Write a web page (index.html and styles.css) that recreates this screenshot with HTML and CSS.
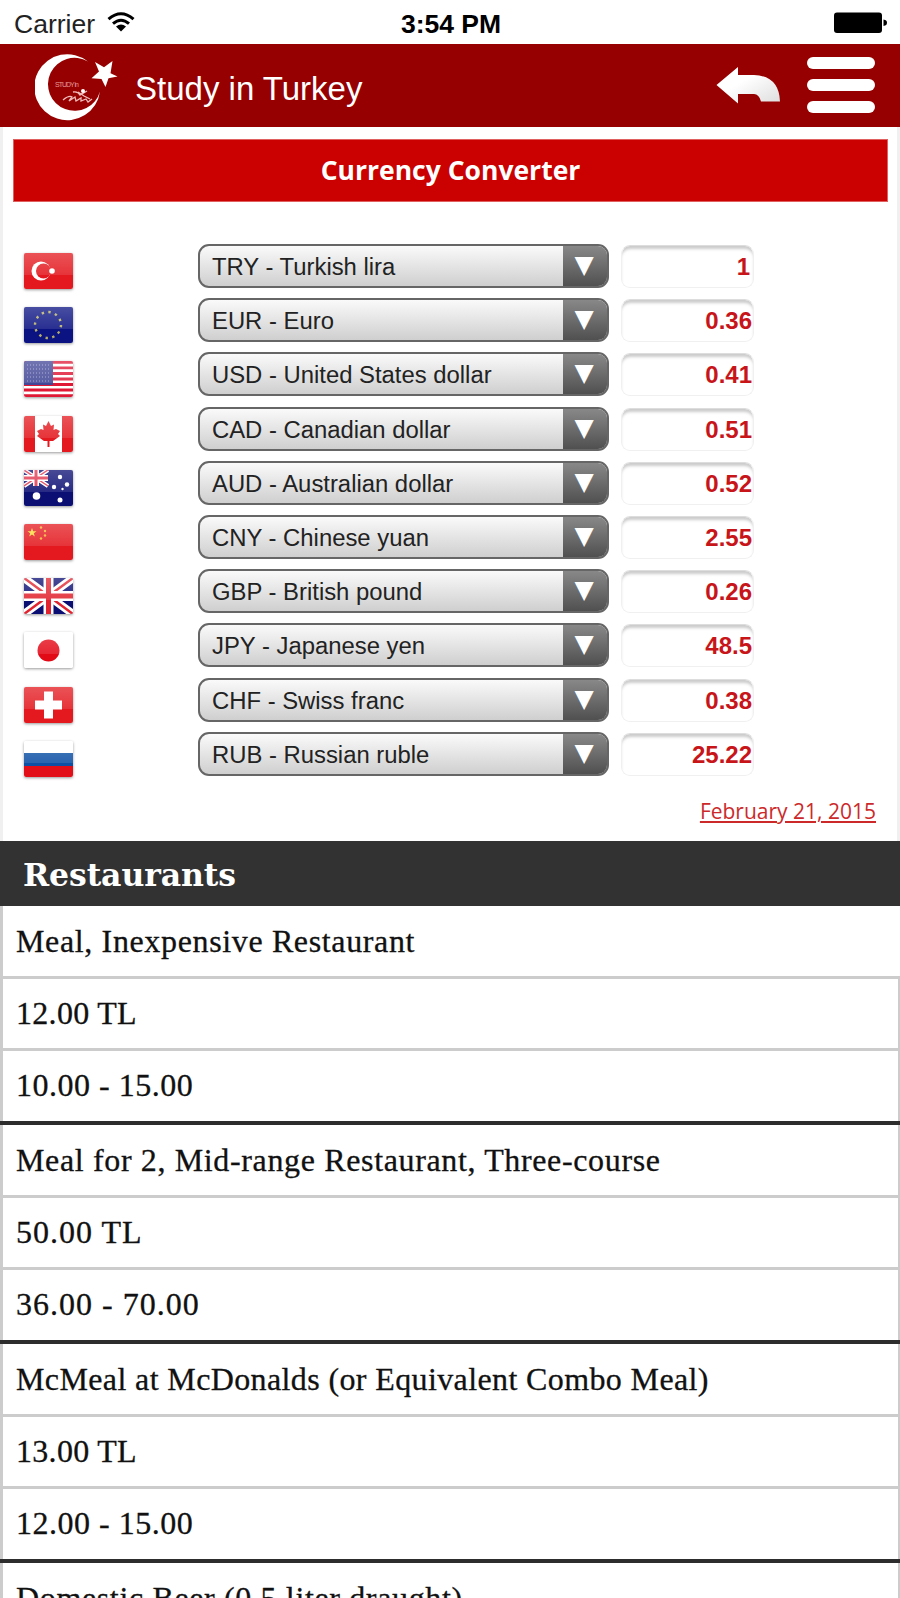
FILE: index.html
```html
<!DOCTYPE html>
<html lang="en">
<head>
    <meta charset="UTF-8">
    <meta name="viewport" content="width=device-width, initial-scale=1.0">
    <title>Study in Turkey</title>
    <link rel="stylesheet" href="styles.css">
</head>
<body>
    <div class="status-bar">
        <div class="carrier">
            <span>Carrier</span>
            <svg class="wifi" width="28" height="20" viewBox="0 0 28 20">
                <path d="M1.5 7.2Q14 -3.800 26.500 7.200M6 11.700Q14 4.800 22 11.700" fill="none" stroke="#000" stroke-width="3"/>
                <path d="M14 19.500L9 14.500Q14 10.500 19 14.500Z"/>
            </svg>
        </div>
        <div class="time">3:54 PM</div>
        <svg class="battery" width="54" height="22" viewBox="0 0 54 22">
            <rect x="0" y="0.500" width="48" height="20.500" rx="3"/>
            <path d="M49.500 7.500Q53 8 53 10.700T49.500 14Z"/>
        </svg>
    </div>

    <header class="header">
        <svg class="logo" width="84" height="70" viewBox="0 0 84 70">
            <path d="M53 8.500A33 33 0 1 0 65 38.500A26.500 26.500 0 1 1 53 8.500Z" fill="#fff"/>
            <path d="M77.500 8L75.500 20.200L82.500 23.500L73.500 25.300L70.500 34L66.500 26L56.500 25.200L64 18.500L60 9L69 14.300Z" fill="#fff"/>
            <text x="20" y="34" class="logo-text" textLength="24">STUDY in</text>
            <path d="M28 47Q34 42 37 44L34 48L40 44L41 48L46 45V48L51 46L53 49L57 46M38 39Q43 38 45 42L52 38M43 39L49 43L55 46" fill="none" stroke="#f0bcbc" stroke-width="1.300"/>
            <circle cx="48" cy="38" r="2" fill="#fff"/>
        </svg>
        <h1>Study in Turkey</h1>
        <svg class="back" width="66" height="40" viewBox="0 0 66 40">
            <defs>
                <linearGradient id="arrow" x1="0" y1="0" x2="1" y2="1">
                    <stop offset="0.400" stop-color="#fff"/>
                    <stop offset="1" stop-color="#ddd"/>
                </linearGradient>
                <linearGradient id="gloss" x1="0" y1="0" x2="0" y2="1">
                    <stop offset="0" stop-color="#fff" stop-opacity="0.250"/>
                    <stop offset="0.600" stop-color="#fff" stop-opacity="0.120"/>
                    <stop offset="0.600" stop-color="#fff" stop-opacity="0"/>
                </linearGradient>
            </defs>
            <path d="M0.500 19L22 1V9H38Q63 10 64 35.500H45Q43 28 38 28H22V37.500Z" fill="url(#arrow)"/>
        </svg>
        <div class="menu"><span></span><span></span><span></span></div>
    </header>

    <section class="converter">
        <h2>Currency Converter</h2>
        <div class="rates">
            <div class="rate">
                <svg class="flag" viewBox="0 0 49 36"><rect width="49" height="36" fill="#e3191f"/><circle cx="17" cy="18" r="9.500" fill="#fff"/><circle cx="19.500" cy="18" r="7.500" fill="#e3191f"/><circle cx="28" cy="18" r="2.800" fill="#fff"/><rect width="49" height="36" fill="url(#gloss)"/></svg>
                <div class="select">TRY - Turkish lira</div>
                <div class="amount first">1</div>
            </div>
            <div class="rate">
                <svg class="flag" viewBox="0 0 49 36"><rect width="49" height="36" fill="#0b1382"/><circle cx="24" cy="18" r="13" fill="none" stroke="#b5ae66" stroke-width="2.400" stroke-dasharray="2.400 4.400"/><rect width="49" height="36" fill="url(#gloss)"/></svg>
                <div class="select">EUR - Euro</div>
                <div class="amount">0.36</div>
            </div>
            <div class="rate">
                <svg class="flag" viewBox="0 0 49 36"><rect width="49" height="36" fill="#fff"/><path d="M0 1.400H49M0 6.900H49M0 12.500H49M0 18H49M0 23.500H49M0 29H49M0 34.600H49" stroke="#e01835" stroke-width="2.800"/><rect width="29" height="24" fill="#424797"/><path d="M3 4H27M3 8H27M3 12H27M3 16H27M3 20H27" stroke="#9ca0cc" stroke-width="1" stroke-dasharray="1 2"/><rect width="49" height="36" fill="url(#gloss)"/></svg>
                <div class="select">USD - United States dollar</div>
                <div class="amount">0.41</div>
            </div>
            <div class="rate">
                <svg class="flag" viewBox="0 0 49 36"><rect width="49" height="36" fill="#fff"/><path d="M0 0H11V36H0ZM38 0H49V36H38Z" fill="#e3191f"/><path d="M24.500 5L27 10L30 8.500L29.500 14L32 13L36 15L34 18L36 20L29 25L25.500 25V31H23.500V25L20 25L13 20L15 18L13 15L17 13L19.500 14L19 8.500L22 10Z" fill="#e3191f"/><rect width="49" height="36" fill="url(#gloss)"/></svg>
                <div class="select">CAD - Canadian dollar</div>
                <div class="amount">0.51</div>
            </div>
            <div class="rate">
                <svg class="flag" viewBox="0 0 49 36"><rect width="49" height="36" fill="#0b0e73"/><path d="M0 0L24 16M24 0L0 16" stroke="#fff" stroke-width="4"/><path d="M0 0L24 16M24 0L0 16" stroke="#e1344d" stroke-width="1.500"/><path d="M12 0V16M0 8H24" stroke="#fff" stroke-width="6"/><path d="M12 0V16M0 8H24" stroke="#e1344d" stroke-width="3"/><g fill="#fff"><circle cx="12.500" cy="26" r="3.800"/><circle cx="36" cy="7" r="2.200"/><circle cx="30" cy="17" r="2.200"/><circle cx="43" cy="14.500" r="2.200"/><circle cx="36" cy="30" r="2.500"/><circle cx="38.500" cy="19" r="1.200"/></g><rect width="49" height="36" fill="url(#gloss)"/></svg>
                <div class="select">AUD - Australian dollar</div>
                <div class="amount">0.52</div>
            </div>
            <div class="rate">
                <svg class="flag" viewBox="0 0 49 36"><rect width="49" height="36" fill="#e3191f"/><path d="M8 4L9.200 7.200H12.500L9.800 9.300L10.800 12.500L8 10.500L5.200 12.500L6.200 9.300L3.500 7.200H6.800Z" fill="#ffd83a"/><g fill="#f6b02e"><circle cx="17" cy="3.500" r="1.200"/><circle cx="21" cy="7" r="1.200"/><circle cx="21" cy="11.500" r="1.200"/><circle cx="17" cy="14.500" r="1.200"/></g><rect width="49" height="36" fill="url(#gloss)"/></svg>
                <div class="select">CNY - Chinese yuan</div>
                <div class="amount">2.55</div>
            </div>
            <div class="rate">
                <svg class="flag" viewBox="0 0 49 36"><rect width="49" height="36" fill="#0b0e73"/><path d="M0 0L49 36M49 0L0 36" stroke="#fff" stroke-width="8"/><path d="M0 0L49 36M49 0L0 36" stroke="#e1242f" stroke-width="2.500"/><path d="M24.500 0V36M0 18H49" stroke="#fff" stroke-width="10"/><path d="M24.500 0V36M0 18H49" stroke="#e1242f" stroke-width="5"/><rect width="49" height="36" fill="url(#gloss)"/></svg>
                <div class="select">GBP - British pound</div>
                <div class="amount">0.26</div>
            </div>
            <div class="rate">
                <svg class="flag" viewBox="0 0 49 36"><rect width="49" height="36" fill="#fff"/><circle cx="24.500" cy="18.500" r="11" fill="#e30a18"/><rect width="49" height="36" fill="url(#gloss)"/></svg>
                <div class="select">JPY - Japanese yen</div>
                <div class="amount">48.5</div>
            </div>
            <div class="rate">
                <svg class="flag" viewBox="0 0 49 36"><rect width="49" height="36" fill="#e3191f"/><path d="M24.500 4.500V31.500M11 18H38" stroke="#fff" stroke-width="9"/><rect width="49" height="36" fill="url(#gloss)"/></svg>
                <div class="select">CHF - Swiss franc</div>
                <div class="amount">0.38</div>
            </div>
            <div class="rate">
                <svg class="flag" viewBox="0 0 49 36"><rect width="49" height="36" fill="#fff"/><rect y="12" width="49" height="13" fill="#0d50a4"/><rect y="25" width="49" height="11" fill="#e30f18"/><rect width="49" height="36" fill="url(#gloss)"/></svg>
                <div class="select">RUB - Russian ruble</div>
                <div class="amount">25.22</div>
            </div>
        </div>
        <a class="date">February 21, 2015</a>
    </section>

    <section class="prices">
        <h3>Restaurants</h3>
        <div class="group">
            <div class="name">Meal, Inexpensive Restaurant</div>
            <div class="price">12.00 TL</div>
            <div class="range">10.00 - 15.00</div>
        </div>
        <div class="group">
            <div class="name">Meal for 2, Mid-range Restaurant, Three-course</div>
            <div class="price wide">50.00 TL</div>
            <div class="range wide">36.00 - 70.00</div>
        </div>
        <div class="group">
            <div class="name tight">McMeal at McDonalds (or Equivalent Combo Meal)</div>
            <div class="price">13.00 TL</div>
            <div class="range">12.00 - 15.00</div>
        </div>
        <div class="group">
            <div class="name">Domestic Beer (0.5 liter draught)</div>
        </div>
    </section>
</body>
</html>
```
FILE: styles.css
```css
body {
    margin: 0;
    height: 1598px;
    overflow: hidden;
    background-color: #fff;
    font-family: "Liberation Sans", Arial, sans-serif;
}
h1, h2, h3 {
    margin: 0;
}
.status-bar {
    display: grid;
    grid-template-columns: 1fr 1fr 1fr;
    align-items: center;
    height: 44px;
    padding: 4px 12px 0 14px;
    box-sizing: border-box;
    font-size: 26.5px;
    color: #222;
}
.carrier {
    display: flex;
    align-items: center;
    gap: 12px;
}
.wifi {
    margin-top: -4px;
}
.time {
    text-align: center;
    font-weight: bold;
    color: #000;
}
.battery {
    justify-self: end;
    margin-top: -2px;
}
.header {
    display: flex;
    align-items: center;
    height: 83px;
    padding: 0 25px 0 35px;
    box-sizing: border-box;
    background-color: #960000;
}
.logo {
    margin-top: 5px;
}
.logo-text {
    font-size: 7px;
    fill: #e59a9a;
}
.header h1 {
    flex: 1;
    padding: 7px 0 0 16px;
    font-size: 33px;
    font-weight: normal;
    color: #fff;
}
.back {
    margin-right: 25px;
}
.menu {
    display: flex;
    flex-direction: column;
    gap: 10px;
    width: 68px;
    margin-top: -2px;
}
.menu span {
    height: 12px;
    border-radius: 6px;
    background-color: #fff;
}
.converter {
    height: 714px;
    padding: 12px 10px 0;
    box-sizing: border-box;
    border-left: 3px solid #f0f0f0;
    border-right: 3px solid #f0f0f0;
}
.converter h2 {
    height: 63px;
    margin-right: -1px;
    box-sizing: border-box;
    border: 1px solid #e06060;
    background-color: #cb0000;
    font: bold 26.5px/61px "Open Sans", sans-serif;
    text-align: center;
    color: #fff;
}
.rates {
    padding-top: 42px;
}
.rate {
    display: flex;
    align-items: flex-start;
    height: 54.2px;
}
.flag {
    width: 49px;
    height: 36px;
    margin: 9px 125px 0 11px;
    border-radius: 2px;
    box-shadow: 0 1px 3px rgba(0, 0, 0, 0.4);
}
.select {
    display: flex;
    justify-content: space-between;
    width: 411px;
    height: 44px;
    box-sizing: border-box;
    padding-left: 12px;
    border: 2px solid #666;
    border-radius: 11px;
    background: linear-gradient(#fafafa, #cfcfcf);
    font-size: 23.85px;
    line-height: 41px;
    color: #222;
    overflow: hidden;
}
.select::after {
    content: "▼";
    width: 44px;
    background: linear-gradient(to bottom, #888, #505050);
    font: 25px/38px "DejaVu Sans", sans-serif;
    text-align: center;
    text-indent: -2px;
    color: #fff;
}
.amount {
    width: 133px;
    height: 43px;
    margin: 1px 0 0 12px;
    padding-right: 1px;
    box-sizing: border-box;
    border: 1px solid #f0f0f0;
    border-top-color: #ddd;
    border-radius: 9px;
    box-shadow: inset 0 4px 3px -1px #ccc;
    font-size: 24px;
    font-weight: bold;
    line-height: 41px;
    text-align: right;
    color: #c7151a;
}
.first {
    padding-right: 3px;
}
.date {
    display: block;
    margin-top: 10px;
    padding-right: 11px;
    font: 21px/30px "Open Sans", sans-serif;
    text-align: right;
    text-decoration: underline;
    color: #cc2a2a;
}
.prices {
    font-family: "Liberation Serif", Georgia, serif;
}
.prices h3 {
    height: 65px;
    padding-left: 23px;
    background-color: #323232;
    font: bold 31.5px/67px "DejaVu Serif", serif;
    letter-spacing: -0.1px;
    color: #fff;
}
.group {
    border-top: 4px solid #2d2d2d;
    font-size: 32px;
    color: #111;
    -webkit-text-stroke: 0.3px #111;
}
.prices h3 + .group {
    border-top: none;
}
.name, .price, .range {
    box-sizing: border-box;
    padding-left: 13px;
    border-left: 3px solid #ccc;
    border-right: 2px solid #ccc;
    white-space: nowrap;
}
.name {
    height: 73px;
    border-bottom: 3px solid #ccc;
    line-height: 70px;
    letter-spacing: 0.64px;
}
.prices h3 + .group .name {
    border-right: none;
}
.price {
    height: 71.5px;
    border-bottom: 3px solid #ccc;
    line-height: 68px;
    letter-spacing: 0.3px;
}
.range {
    height: 70.5px;
    line-height: 68px;
    letter-spacing: 0.5px;
}
.wide {
    letter-spacing: 1px;
}
.tight {
    letter-spacing: 0.38px;
}
```
